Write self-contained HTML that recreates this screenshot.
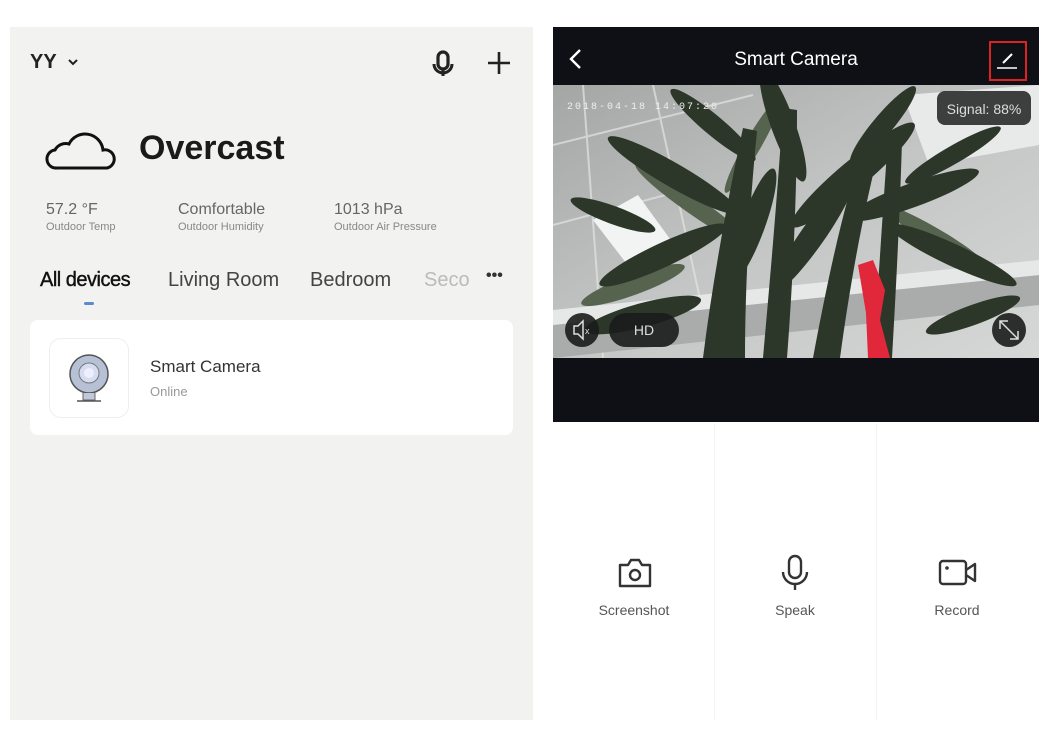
<!DOCTYPE html>
<html><head><meta charset="utf-8"><style>
*{margin:0;padding:0;box-sizing:border-box}
body{width:1053px;height:729px;background:#fff;position:relative;overflow:hidden;font-family:"Liberation Sans",sans-serif}
.a{position:absolute}
#L{left:10px;top:27px;width:523px;height:693px;background:#f2f2f0}
.g{color:#666}
</style></head><body>
<div id="L" class="a">
  <div class="a" style="left:20px;top:24px;font-size:20px;font-weight:bold;color:#222">YY</div>
  <svg class="a" style="left:57px;top:30px" width="12" height="10"><path d="M2 3l4 4 4-4" stroke="#222" stroke-width="2" fill="none"/></svg>
  <svg class="a" style="left:420px;top:22px" width="26" height="30" viewBox="0 0 26 30"><rect x="8" y="3" width="10" height="17" rx="5" stroke="#222" stroke-width="3.2" fill="none"/><path d="M4 15a9 9 0 0 0 18 0" stroke="#222" stroke-width="3" fill="none"/><line x1="13" y1="21" x2="13" y2="27" stroke="#222" stroke-width="3"/></svg>
  <svg class="a" style="left:476px;top:23px" width="26" height="26"><path d="M13 2v22M2 13h22" stroke="#222" stroke-width="2.6"/></svg>
  <svg class="a" style="left:35px;top:100px" width="74" height="44" viewBox="0 0 74 44"><path d="M12 41a9 9 0 0 1-2-18a12 12 0 0 1 14-6a18 18 0 0 1 34 6a9 9 0 0 1 4 18z" stroke="#111" stroke-width="3" fill="none"/></svg>
  <div class="a" style="left:129px;top:102px;font-size:34px;font-weight:bold;color:#1a1a1a">Overcast</div>
  <div class="a g" style="left:36px;top:174px;font-size:16px">57.2 °F</div>
  <div class="a" style="left:36px;top:194px;font-size:11px;color:#888">Outdoor Temp</div>
  <div class="a g" style="left:168px;top:174px;font-size:16px">Comfortable</div>
  <div class="a" style="left:168px;top:194px;font-size:11px;color:#888">Outdoor Humidity</div>
  <div class="a g" style="left:324px;top:174px;font-size:16px">1013 hPa</div>
  <div class="a" style="left:324px;top:194px;font-size:11px;color:#888">Outdoor Air Pressure</div>
  <div class="a" style="left:30px;top:242px;font-size:20px;color:#111;letter-spacing:-0.5px;-webkit-text-stroke:0.4px #111">All devices</div>
  <div class="a" style="left:74px;top:275px;width:10px;height:3px;border-radius:2px;background:#5b8bc8"></div>
  <div class="a" style="left:158px;top:242px;font-size:20px;color:#444">Living Room</div>
  <div class="a" style="left:300px;top:242px;font-size:20px;color:#444">Bedroom</div>
  <div class="a" style="left:414px;top:242px;font-size:20px;color:#bbb;width:46px;overflow:hidden;white-space:nowrap">Second</div>
  <div class="a" style="left:476px;top:240px;font-size:16px;font-weight:bold;color:#333;letter-spacing:0px">•••</div>
  <div class="a" style="left:20px;top:293px;width:483px;height:115px;background:#fff;border-radius:8px"></div>
  <div class="a" style="left:39px;top:311px;width:80px;height:80px;background:#fff;border:1px solid #eee;border-radius:12px"></div>
  <svg class="a" style="left:55px;top:323px" width="48" height="60" viewBox="0 0 48 60"><circle cx="24" cy="24" r="19" fill="#b6c1d6" stroke="#555" stroke-width="1.5"/><circle cx="24" cy="23" r="10" fill="#d7ddf0" stroke="#777"/><circle cx="24" cy="23" r="5" fill="#eef"/><path d="M18 43v7h12v-7" fill="#c0c8da" stroke="#666"/><line x1="12" y1="51" x2="36" y2="51" stroke="#555" stroke-width="1.5"/></svg>
  <div class="a" style="left:140px;top:330px;font-size:17px;color:#333">Smart Camera</div>
  <div class="a" style="left:140px;top:357px;font-size:13px;color:#999">Online</div>
</div>

<div class="a" style="left:553px;top:27px;width:486px;height:58px;background:#0e1016"></div>
<svg class="a" style="left:568px;top:48px" width="16" height="24"><path d="M12 2L3 11l9 9" stroke="#fff" stroke-width="2.4" fill="none"/></svg>
<div class="a" style="left:553px;top:49px;width:486px;text-align:center;color:#fff;font-size:19px">Smart Camera</div>
<div class="a" style="left:989px;top:41px;width:38px;height:40px;border:2px solid #d22"></div>
<svg class="a" style="left:995px;top:50px" width="24" height="22"><path d="M8 13l9-9" stroke="#fff" stroke-width="2"/><line x1="2" y1="18" x2="22" y2="18" stroke="#fff" stroke-width="1.5"/></svg>

<svg class="a" style="left:553px;top:85px" width="486" height="273" viewBox="0 0 486 273">
  <defs><linearGradient id="bg" x1="0" y1="0" x2="1" y2="1"><stop offset="0" stop-color="#a4a6a5"/><stop offset=".5" stop-color="#c4c6c5"/><stop offset="1" stop-color="#d6d8d7"/></linearGradient></defs>
  <rect width="486" height="273" fill="url(#bg)"/>
  <g stroke="#e2e4e3" stroke-width="2" fill="none" opacity=".7"><path d="M0 60l200-50M0 140l150-40M100 0l60 273M30 0l20 273"/></g>
  <path d="M40 135l45-25 40 55-45 22z" fill="#f2f4f3"/>
  <path d="M0 240L486 190v30L0 273z" fill="#a9acab"/>
  <path d="M0 225L486 175v15L0 240z" fill="#e6e8e7"/>
  <path d="M350 10l136-10v60l-110 20z" fill="#e8eaea"/>
  <g fill="#56634f">
    <ellipse cx="140" cy="120" rx="70" ry="9" transform="rotate(35 140 120)"/>
    <ellipse cx="380" cy="150" rx="60" ry="8" transform="rotate(30 380 150)"/>
    <ellipse cx="200" cy="60" rx="55" ry="8" transform="rotate(-60 200 60)"/>
    <ellipse cx="80" cy="200" rx="55" ry="10" transform="rotate(-20 80 200)"/>
  </g>
  <g fill="#2c3629">
    <path d="M150 273c10-80 25-160 40-230l14 3c-8 80-12 160-12 227z"/>
    <path d="M210 273c8-90 15-170 20-250l14 2c0 80-4 170-10 248z"/>
    <path d="M260 273c15-80 30-150 50-210l15 6c-15 60-28 130-38 204z"/>
    <path d="M320 273c5-70 10-150 15-220l14 2c-2 70-6 150-10 218z"/>
    <ellipse cx="120" cy="90" rx="75" ry="12" transform="rotate(30 120 90)"/>
    <ellipse cx="230" cy="40" rx="60" ry="12" transform="rotate(70 230 40)"/>
    <ellipse cx="160" cy="40" rx="55" ry="10" transform="rotate(40 160 40)"/>
    <ellipse cx="300" cy="90" rx="80" ry="14" transform="rotate(-40 300 90)"/>
    <ellipse cx="360" cy="110" rx="70" ry="12" transform="rotate(-20 360 110)"/>
    <ellipse cx="400" cy="170" rx="70" ry="11" transform="rotate(25 400 170)"/>
    <ellipse cx="110" cy="170" rx="70" ry="12" transform="rotate(-25 110 170)"/>
    <ellipse cx="90" cy="230" rx="60" ry="12" transform="rotate(-15 90 230)"/>
    <ellipse cx="260" cy="150" rx="70" ry="12" transform="rotate(-55 260 150)"/>
    <ellipse cx="330" cy="40" rx="50" ry="10" transform="rotate(-50 330 40)"/>
    <ellipse cx="200" cy="140" rx="60" ry="12" transform="rotate(-70 200 140)"/>
    <ellipse cx="420" cy="230" rx="50" ry="10" transform="rotate(-20 420 230)"/>
    <ellipse cx="60" cy="130" rx="45" ry="9" transform="rotate(20 60 130)"/>
    <ellipse cx="400" cy="70" rx="55" ry="9" transform="rotate(-30 400 70)"/>
  </g>
  <path d="M305 180l15-5 12 30-5 30 10 38h-22l-2-45z" fill="#e0283a"/>
  <text x="14" y="24" font-size="10" fill="#eee" letter-spacing="2" font-family="Liberation Mono">2018-04-18 14:07:20</text>
  <rect x="384" y="6" width="94" height="34" rx="8" fill="#2a2c2c" opacity=".9"/>
  <text x="431" y="29" font-size="14" fill="#ddd" text-anchor="middle" font-family="Liberation Sans">Signal: 88%</text>
  <circle cx="29" cy="245" r="17" fill="#1a1c1c" opacity=".9"/>
  <path d="M21 241h4l5-5v18l-5-5h-4z" stroke="#ddd" stroke-width="1.5" fill="none"/><text x="32" y="249" font-size="9" fill="#ddd">x</text>
  <rect x="56" y="228" width="70" height="34" rx="17" fill="#1a1c1c" opacity=".9"/>
  <text x="91" y="250" font-size="14" fill="#ddd" text-anchor="middle" font-family="Liberation Sans">HD</text>
  <circle cx="456" cy="245" r="17" fill="#1a1c1c" opacity=".9"/>
  <path d="M447 244v-8h8M465 246v8h-8M447 236l18 18" stroke="#ddd" stroke-width="1.5" fill="none"/>
</svg>
<div class="a" style="left:553px;top:358px;width:486px;height:64px;background:#0e1016"></div>
<div class="a" style="left:714px;top:424px;width:1px;height:296px;background:#f4f4f4"></div>
<div class="a" style="left:876px;top:424px;width:1px;height:296px;background:#f4f4f4"></div>

<svg class="a" style="left:616px;top:557px" width="38" height="34" viewBox="0 0 38 34"><path d="M4 8h8l3-5h8l3 5h8v21H4z" stroke="#333" stroke-width="2.4" fill="none" stroke-linejoin="round"/><circle cx="19" cy="18" r="5" stroke="#333" stroke-width="2.4" fill="none"/></svg>
<div class="a" style="left:574px;top:602px;width:120px;text-align:center;font-size:14px;color:#555">Screenshot</div>
<svg class="a" style="left:780px;top:554px" width="30" height="38" viewBox="0 0 30 38"><rect x="9" y="2" width="12" height="22" rx="6" stroke="#333" stroke-width="2.4" fill="none"/><path d="M3 18a12 12 0 0 0 24 0" stroke="#333" stroke-width="2.4" fill="none"/><line x1="15" y1="30" x2="15" y2="36" stroke="#333" stroke-width="2.4"/></svg>
<div class="a" style="left:735px;top:602px;width:120px;text-align:center;font-size:14px;color:#555">Speak</div>
<svg class="a" style="left:938px;top:559px" width="40" height="28" viewBox="0 0 40 28"><rect x="2" y="2" width="26" height="23" rx="3" stroke="#333" stroke-width="2.4" fill="none"/><path d="M28 11l9-6v17l-9-6" stroke="#333" stroke-width="2.4" fill="none" stroke-linejoin="round"/><circle cx="9" cy="9" r="1.8" fill="#333"/></svg>
<div class="a" style="left:897px;top:602px;width:120px;text-align:center;font-size:14px;color:#555">Record</div>
</body></html>
